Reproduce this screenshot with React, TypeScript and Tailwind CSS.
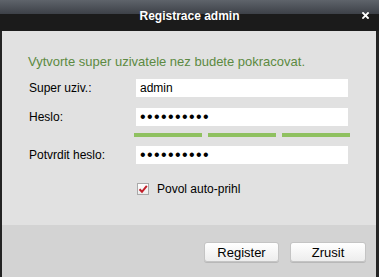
import React, { useState } from 'react';

const App: React.FC = () => {
  const [user, setUser] = useState('admin');
  const [password, setPassword] = useState('1234567890');
  const [confirm, setConfirm] = useState('1234567890');
  const [autoLogin, setAutoLogin] = useState(true);

  return (
    <div className="w-[379px] h-[277px] flex flex-col overflow-hidden font-['Liberation_Sans',Arial,sans-serif] text-black">
      {/* title bar */}
      <div className="relative h-[31px] flex flex-col">
        <div className="h-[14px] bg-gradient-to-b from-[#5f646b] to-[#3d4148]" />
        <div className="flex-1 bg-[#1b1b1b]" />
        <div className="absolute inset-0 flex items-center justify-center text-white text-[12px] font-bold">
          Registrace admin
        </div>
        <button className="absolute right-[10px] top-[11px] w-[8px] h-[8px] flex items-center justify-center">
          <svg width="7" height="7" viewBox="0 0 7 7">
            <path d="M1 1L6 6M6 1L1 6" stroke="#ffffff" strokeWidth="1.8" strokeLinecap="square" />
          </svg>
        </button>
      </div>

      {/* body */}
      <div className="flex-1 flex flex-col border-l-2 border-r-[3px] border-[#232323]">
        <div className="h-[194px] bg-[#e1e1e1] pl-[26px] pt-[23px]">
          <p className="text-[13px] leading-[16px] text-[#5c8a42]">
            Vytvorte super uzivatele nez budete pokracovat.
          </p>

          <div className="grid grid-cols-[108px_212px] items-center text-[12px] mt-[9px]">
            <label className="pl-[1px]">Super uziv.:</label>
            <input
              value={user}
              onChange={(e) => setUser(e.target.value)}
              className="h-[18px] bg-white px-[4px] text-[12px] outline-none"
            />

            <label className="pl-[1px] mt-[11px]">Heslo:</label>
            <input
              type="password"
              value={password}
              onChange={(e) => setPassword(e.target.value)}
              className="h-[18px] mt-[11px] bg-white px-[4px] text-[16px] tracking-[1.4px] outline-none"
            />

            <div />
            <div className="flex gap-[6px] -ml-[2px] w-[216px] mt-[7px]">
              <div className="w-[68px] h-[4px] bg-[#8fc160]" />
              <div className="w-[68px] h-[4px] bg-[#8fc160]" />
              <div className="w-[68px] h-[4px] bg-[#8fc160]" />
            </div>

            <label className="pl-[1px] mt-[9px]">Potvrdit heslo:</label>
            <input
              type="password"
              value={confirm}
              onChange={(e) => setConfirm(e.target.value)}
              className="h-[18px] mt-[9px] bg-white px-[4px] text-[16px] tracking-[1.4px] outline-none"
            />

            <div />
            <label className="flex items-center gap-[8px] mt-[16px] ml-[1px] cursor-pointer">
              <span
                onClick={() => setAutoLogin(!autoLogin)}
                className="w-[12px] h-[12px] border border-[#a9a9a9] bg-gradient-to-b from-white to-[#ececec] flex items-center justify-center"
              >
                {autoLogin && (
                  <svg width="10" height="10" viewBox="0 0 10 10">
                    <path d="M1.5 5.2L4 7.8L8.8 1.8" fill="none" stroke="#c21f2a" strokeWidth="2" />
                  </svg>
                )}
              </span>
              <span className="text-[12px]">Povol auto-prihl</span>
            </label>
          </div>
        </div>

        {/* footer */}
        <div className="flex-1 bg-[#d3d3d3] flex justify-end items-start gap-[11px] pt-[17px] pr-[10px]">
          <button className="w-[75px] h-[20px] rounded-[3px] bg-gradient-to-b from-white to-[#ededed] border border-[#c4c4c4] shadow-[0_1px_0_#b8b8b8] text-[13px] leading-none">
            Register
          </button>
          <button className="w-[76px] h-[20px] rounded-[3px] bg-gradient-to-b from-white to-[#ededed] border border-[#c4c4c4] shadow-[0_1px_0_#b8b8b8] text-[13px] leading-none">
            Zrusit
          </button>
        </div>
      </div>
    </div>
  );
};

export default App;
